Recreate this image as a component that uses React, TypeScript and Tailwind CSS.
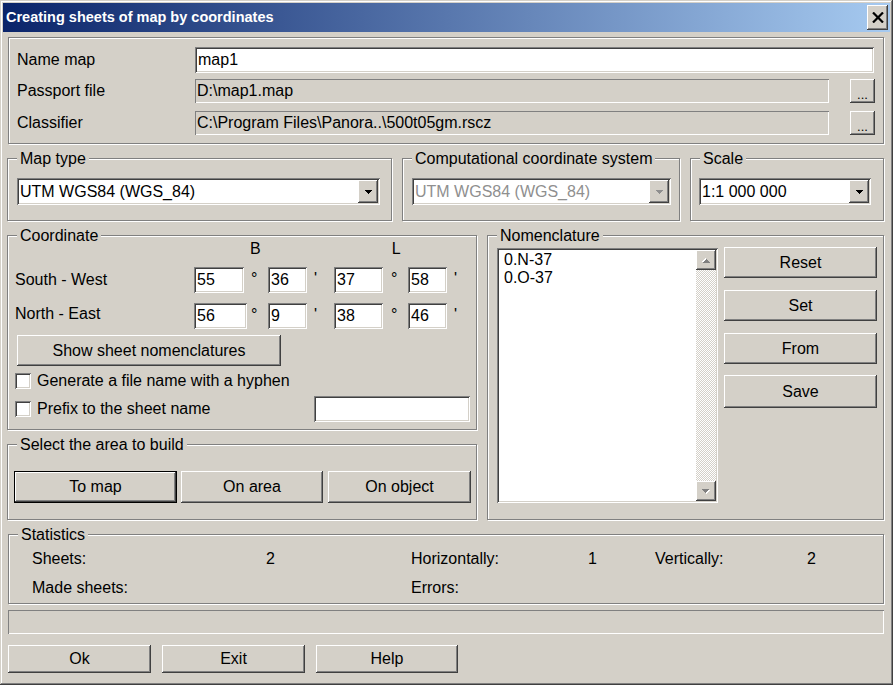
import React from 'react';

const raised =
  'bg-[#d4d0c8] shadow-[inset_-1px_-1px_#404040,inset_1px_1px_#fff,inset_-2px_-2px_#808080]';
const sunken =
  'bg-white shadow-[inset_1px_1px_#808080,inset_-1px_-1px_#fff,inset_2px_2px_#404040,inset_-2px_-2px_#d4d0c8]';
const flat = 'bg-[#d4d0c8] shadow-[inset_1px_1px_#808080,inset_-1px_-1px_#fff]';
const etched = 'border border-[#808080] shadow-[inset_1px_1px_#fff,1px_1px_#fff]';

function Group({ label, className = '', children }: { label: string; className?: string; children?: React.ReactNode }) {
  return (
    <div className={`${etched} ${className}`}>
      <div className="-mt-[9px] ml-[9px] w-fit px-[3px] bg-[#d4d0c8] leading-[18px]">{label}</div>
      {children}
    </div>
  );
}

function Btn({ children, className = '' }: { children: React.ReactNode; className?: string }) {
  return (
    <button className={`${raised} flex items-center justify-center leading-none ${className}`}>
      {children}
    </button>
  );
}

function Arrow({ color = '#000' }: { color?: string }) {
  return (
    <svg width="7" height="4" viewBox="0 0 7 4" shapeRendering="crispEdges">
      <path d="M0 0h7v1h-1v1h-1v1h-1v1h-1v-1h-1v-1h-1v-1h-1z" fill={color} />
    </svg>
  );
}

function Combo({ value, disabled = false, className = '' }: { value: string; disabled?: boolean; className?: string }) {
  return (
    <div className={`${sunken} h-[27px] flex items-center pl-[3px] pr-[2px] ${className}`}>
      <span className={`flex-1 ${disabled ? 'text-[#8f8f8f]' : ''}`}>{value}</span>
      <div className={`${raised} w-[20px] h-[23px] flex items-center justify-center`}>
        <Arrow color={disabled ? '#8f8f8f' : '#000'} />
      </div>
    </div>
  );
}

function Field({ value, className = '' }: { value: string; className?: string }) {
  return (
    <input
      readOnly
      value={value}
      className={`${sunken} h-[26px] pl-[3px] outline-none ${className}`}
    />
  );
}

function Check({ label }: { label: string }) {
  return (
    <div className="flex items-center">
      <div className={`${sunken} w-[16px] h-[16px]`} />
      <span className="ml-[6px]">{label}</span>
    </div>
  );
}

function ScrollBtn({ up }: { up: boolean }) {
  return (
    <div className={`${raised} w-[20px] h-[20px] flex items-center justify-center`}>
      <svg width="8" height="5" viewBox="0 0 8 5" shapeRendering="crispEdges" className={up ? 'rotate-180' : ''}>
        <path d="M1 1h7v1h-1v1h-1v1h-1v1h-1v-1h-1v-1h-1v-1h-1z" fill="#fff" />
        <path d="M0 0h7v1h-1v1h-1v1h-1v1h-1v-1h-1v-1h-1v-1h-1z" fill="#808080" />
      </svg>
    </div>
  );
}

// degree / minute marks sit near the top of the row
function Mark({ children, className = '' }: { children: React.ReactNode; className?: string }) {
  return <span className={`self-start pt-[3px] leading-[18px] ${className}`}>{children}</span>;
}

export default function App() {
  return (
    <div className="w-[893px] h-[685px] overflow-hidden bg-[#d4d0c8] p-[3px] text-[16px] text-black font-['Liberation_Sans',Arial,sans-serif] shadow-[inset_-1px_-1px_#404040,inset_1px_1px_#d4d0c8,inset_-2px_-2px_#808080,inset_2px_2px_#fff]">
      {/* title bar */}
      <div className="h-[29px] flex items-center justify-between pl-[3px] pr-[2px] bg-[linear-gradient(to_right,#0a246a,#a6caf0)]">
        <span className="text-white font-bold text-[14.5px]">Creating sheets of map by coordinates</span>
        <button className={`${raised} w-[21px] h-[25px] flex items-center justify-center`}>
          <svg width="12" height="11" viewBox="0 0 12 11">
            <path d="M1 0.5L11 10.5M11 0.5L1 10.5" stroke="#000" strokeWidth="2.2" />
          </svg>
        </button>
      </div>

      <div className="pl-[4px]">
        {/* name / files */}
        <div className={`${etched} mt-[5px] ml-px w-[876px] pt-[9px] pb-[8px] pl-[8px]`}>
          <div className="flex items-center">
            <span className="w-[178px]">Name map</span>
            <Field value="map1" className="w-[679px]" />
          </div>
          <div className="flex items-center mt-[6px]">
            <span className="w-[178px]">Passport file</span>
            <div className={`${flat} w-[634px] h-[24px] pl-[2px] flex items-center`}>D:\map1.map</div>
            <Btn className="ml-[21px] w-[25px] h-[24px] text-[13px] pt-[6px]">...</Btn>
          </div>
          <div className="flex items-center mt-[8px]">
            <span className="w-[178px]">Classifier</span>
            <div className={`${flat} w-[634px] h-[24px] pl-[2px] flex items-center`}>
              C:\Program Files\Panora..\500t05gm.rscz
            </div>
            <Btn className="ml-[21px] w-[25px] h-[24px] text-[13px] pt-[6px]">...</Btn>
          </div>
        </div>

        {/* map type / system / scale */}
        <div className="flex gap-[10px] mt-[14px]">
          <Group label="Map type" className="w-[385px] pb-[15px]">
            <Combo value="UTM WGS84 (WGS_84)" className="mt-[10px] ml-[9px] w-[363px]" />
          </Group>
          <Group label="Computational coordinate system" className="w-[278px] pb-[15px]">
            <Combo value="UTM WGS84 (WGS_84)" disabled className="mt-[10px] ml-[9px] w-[259px]" />
          </Group>
          <Group label="Scale" className="w-[194px] pb-[15px]">
            <Combo value="1:1 000 000" className="mt-[10px] ml-[8px] w-[172px]" />
          </Group>
        </div>

        <div className="flex gap-[10px] mt-[14px]">
          <div className="w-[470px]">
            {/* coordinate */}
            <Group label="Coordinate" className="pb-[7px]">
              <div className="-mt-[5px] flex h-[18px] leading-[18px]">
                <span className="ml-[242px]">B</span>
                <span className="ml-[131px]">L</span>
              </div>
              <div className="flex items-center h-[26px] mt-[9px] pl-[7px]">
                <span className="w-[179px]">South - West</span>
                <Field value="55" className="w-[50px]" />
                <Mark className="w-[24px] pl-[7px]">°</Mark>
                <Field value="36" className="w-[39px]" />
                <Mark className="w-[27px] pl-[7px]">'</Mark>
                <Field value="37" className="w-[49px]" />
                <Mark className="w-[25px] pl-[8px]">°</Mark>
                <Field value="58" className="w-[39px]" />
                <Mark className="pl-[7px]">'</Mark>
              </div>
              <div className="flex items-center h-[26px] mt-[10px] pl-[7px]">
                <span className="w-[179px] -mt-[5px]">North - East</span>
                <Field value="56" className="w-[53px]" />
                <Mark className="w-[21px] pl-[4px]">°</Mark>
                <Field value="9" className="w-[39px]" />
                <Mark className="w-[27px] pl-[7px]">'</Mark>
                <Field value="38" className="w-[49px]" />
                <Mark className="w-[25px] pl-[8px]">°</Mark>
                <Field value="46" className="w-[39px]" />
                <Mark className="pl-[7px]">'</Mark>
              </div>
              <Btn className="mt-[6px] ml-[9px] w-[264px] h-[31px]">Show sheet nomenclatures</Btn>
              <div className="mt-[7px] ml-[7px] h-[16px] flex items-center">
                <Check label="Generate a file name with a hyphen" />
              </div>
              <div className="mt-[7px] ml-[7px] pr-[6px] h-[26px] flex items-center justify-between">
                <Check label="Prefix to the sheet name" />
                <Field value="" className="w-[156px]" />
              </div>
            </Group>

            {/* area */}
            <Group label="Select the area to build" className="mt-[14px] pb-[16px]">
              <div className="mt-[17px] ml-[6px] flex">
                <Btn className="w-[163px] h-[32px] border border-black">To map</Btn>
                <Btn className="ml-[4px] w-[142px] h-[32px]">On area</Btn>
                <Btn className="ml-[5px] w-[143px] h-[32px]">On object</Btn>
              </div>
            </Group>
          </div>

          {/* nomenclature */}
          <Group label="Nomenclature" className="w-[397px] h-[285px]">
            <div className="mt-[3px] ml-[9px] flex items-start">
              <div className={`${sunken} w-[221px] h-[255px] p-[2px] flex`}>
                <div className="flex-1 pl-[5px] pt-[1px] leading-[18px]">
                  <div>0.N-37</div>
                  <div>0.O-37</div>
                </div>
                <div className="w-[20px] flex flex-col">
                  <ScrollBtn up />
                  <div className="flex-1 bg-[repeating-conic-gradient(#d4d0c8_0_25%,#fff_0_50%)] bg-[length:2px_2px]" />
                  <ScrollBtn up={false} />
                </div>
              </div>
              <div className="ml-[6px] -mt-px flex flex-col">
                <Btn className="w-[153px] h-[31px]">Reset</Btn>
                <Btn className="mt-[12px] w-[153px] h-[31px]">Set</Btn>
                <Btn className="mt-[12px] w-[153px] h-[31px]">From</Btn>
                <Btn className="mt-[11px] w-[153px] h-[33px]">Save</Btn>
              </div>
            </div>
          </Group>
        </div>

        {/* statistics */}
        <Group label="Statistics" className="mt-[14px] ml-px w-[876px] pb-[6px]">
          <div className="mt-[6px] pl-[23px] flex h-[18px] leading-[18px]">
            <span className="w-[234px]">Sheets:</span>
            <span className="w-[145px]">2</span>
            <span className="w-[177px]">Horizontally:</span>
            <span className="w-[67px]">1</span>
            <span className="w-[152px]">Vertically:</span>
            <span>2</span>
          </div>
          <div className="mt-[11px] pl-[23px] flex h-[18px] leading-[18px]">
            <span className="w-[379px]">Made sheets:</span>
            <span>Errors:</span>
          </div>
        </Group>

        <div className={`${flat} mt-[6px] ml-px w-[876px] h-[24px]`} />

        <div className="mt-[11px] ml-px flex gap-[11px]">
          <Btn className="w-[143px] h-[28px]">Ok</Btn>
          <Btn className="w-[143px] h-[28px]">Exit</Btn>
          <Btn className="w-[142px] h-[28px]">Help</Btn>
        </div>
      </div>
    </div>
  );
}
